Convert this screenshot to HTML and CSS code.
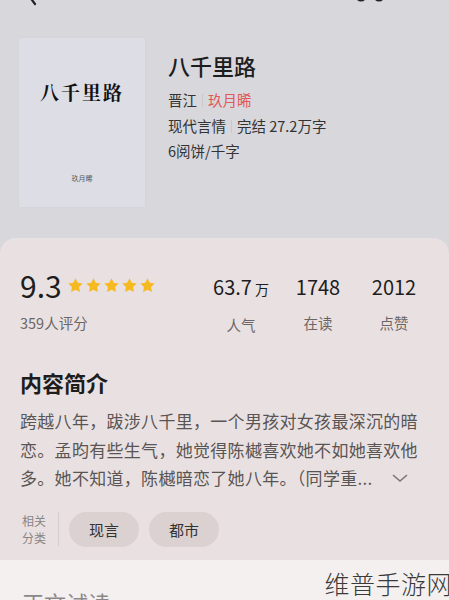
FILE: index.html
```html
<!DOCTYPE html>
<html lang="zh-CN">
  <head>
    <meta charset="UTF-8" />
    <meta name="viewport" content="width=device-width, initial-scale=1.0" />
    <title>八千里路</title>
    <link rel="stylesheet" href="styles.css">
  </head>
  <body>
    <div class="page">
      <div class="topbar">
        <svg class="back-icon" width="12" height="20" viewBox="0 0 12 20">
          <path d="M9 2 L3 10 L9 18" fill="none" stroke="#222" stroke-width="2.2" stroke-linecap="round" />
        </svg>
        <svg class="more-icon" width="34" height="20" viewBox="0 0 34 20">
          <circle cx="8" cy="10" r="4.5" fill="none" stroke="#222" stroke-width="2.2" />
          <circle cx="26" cy="10" r="4.5" fill="none" stroke="#222" stroke-width="2.2" />
        </svg>
      </div>

      <div class="book">
        <div class="cover">
          <div class="cover-title">八千里路</div>
          <div class="cover-author">玖月晞</div>
        </div>
        <div class="info">
          <h1 class="title">八千里路</h1>
          <div class="meta">晋江<span class="sep"></span><span class="author">玖月晞</span></div>
          <div class="meta">现代言情<span class="sep"></span>完结 27.2万字</div>
          <div class="meta">6阅饼/千字</div>
        </div>
      </div>

      <div class="card">
        <div class="stats-row">
          <div class="rating">
            <div class="score">9.3
              <span class="stars">
                <svg viewBox="0 0 20 20"><path d="M10 1.5l2.6 5.4 5.8.8-4.2 4.1 1 5.8L10 14.9l-5.2 2.7 1-5.8L1.6 7.7l5.8-.8z" /></svg>
                <svg viewBox="0 0 20 20"><path d="M10 1.5l2.6 5.4 5.8.8-4.2 4.1 1 5.8L10 14.9l-5.2 2.7 1-5.8L1.6 7.7l5.8-.8z" /></svg>
                <svg viewBox="0 0 20 20"><path d="M10 1.5l2.6 5.4 5.8.8-4.2 4.1 1 5.8L10 14.9l-5.2 2.7 1-5.8L1.6 7.7l5.8-.8z" /></svg>
                <svg viewBox="0 0 20 20"><path d="M10 1.5l2.6 5.4 5.8.8-4.2 4.1 1 5.8L10 14.9l-5.2 2.7 1-5.8L1.6 7.7l5.8-.8z" /></svg>
                <svg viewBox="0 0 20 20"><path d="M10 1.5l2.6 5.4 5.8.8-4.2 4.1 1 5.8L10 14.9l-5.2 2.7 1-5.8L1.6 7.7l5.8-.8z" /></svg>
              </span>
            </div>
            <div class="label">359人评分</div>
          </div>
          <div class="stats">
            <div class="stat">
              <div class="num">63.7<small>万</small></div>
              <div class="label">人气</div>
            </div>
            <div class="stat">
              <div class="num">1748</div>
              <div class="label">在读</div>
            </div>
            <div class="stat">
              <div class="num">2012</div>
              <div class="label">点赞</div>
            </div>
          </div>
        </div>

        <h2 class="section-title">内容简介</h2>
        <p class="summary">跨越八年，跋涉八千里，一个男孩对女孩最深沉的暗恋。孟昀有些生气，她觉得陈樾喜欢她不如她喜欢他多。她不知道，陈樾暗恋了她八年。（同学重...<svg class="chevron" width="18" height="12" viewBox="0 0 18 12"><path d="M2 3 L9 9 L16 3" fill="none" stroke="#777" stroke-width="1.6" /></svg></p>

        <div class="tags">
          <div class="tags-label">相关<br />分类</div>
          <span class="tag">现言</span>
          <span class="tag">都市</span>
        </div>
      </div>

      <div class="reading">
        <div class="reading-title">正文试读</div>
      </div>

      <div class="watermark">维普手游网</div>
    </div>
  </body>
</html>
```

FILE: styles.css
```css
body {
  margin: 0;
  padding: 0;
  background-color: #d8d7dc;
  font-family: "Noto Sans CJK SC", "Noto Sans", sans-serif;
  color: #222;
}

.page {
  position: relative;
  width: 449px;
  height: 600px;
  overflow: hidden;
}

/* Top bar, mostly scrolled away */
.topbar {
  height: 6px;
  display: flex;
  justify-content: space-between;
  align-items: flex-end;
  padding: 0 62px 0 26px;
  overflow: hidden;
}

.topbar svg {
  display: block;
  flex-shrink: 0;
}

/* Book header */
.book {
  display: flex;
  gap: 23px;
  padding: 32px 0 0 19px;
}

.cover {
  width: 126px;
  height: 169px;
  background-color: #dddee5;
  box-shadow: 0 0 3px rgba(0, 0, 0, 0.04);
  display: flex;
  flex-direction: column;
  align-items: center;
}

.cover-title {
  margin-top: 40px;
  font-family: "Noto Serif CJK SC", "Noto Sans CJK SC", serif;
  font-weight: bold;
  font-size: 19px;
  letter-spacing: 2px;
  color: #111;
}

.cover-author {
  margin-top: 68px;
  font-size: 7px;
  color: #555;
}

.info {
  padding-top: 12px;
}

.title {
  margin: 0;
  font-size: 22px;
  font-weight: 500;
  line-height: 30px;
  color: #1d1d1d;
}

.meta {
  font-size: 14.5px;
  line-height: 25.5px;
  color: #333;
}

.info .meta:first-of-type {
  margin-top: 7px;
}

.sep {
  display: inline-block;
  width: 1px;
  height: 13px;
  margin: 0 5px;
  vertical-align: -1px;
  background-color: #c9c9cc;
}

.author {
  color: #e0585a;
}

/* Detail card */
.card {
  margin-top: 31px;
  padding: 29px 17px 0 20px;
  background-color: #e9e1e1;
  border-radius: 16px 16px 0 0;
  height: 322px;
  box-sizing: border-box;
}

.stats-row {
  display: flex;
  justify-content: space-between;
}

.score {
  display: flex;
  align-items: center;
  font-size: 30px;
  line-height: 36px;
  color: #1d1d1d;
}

.stars {
  display: flex;
  gap: 1px;
  margin-left: 5px;
}

.stars svg {
  width: 17px;
  height: 17px;
  fill: #f5b922;
}

.label {
  margin-top: 10px;
  font-size: 14.5px;
  line-height: 20px;
  color: #6b6666;
}

.stats {
  display: grid;
  grid-template-columns: 78px 76px 76px;
}

.stat {
  text-align: center;
}

.num {
  font-size: 20px;
  line-height: 40px;
  color: #1d1d1d;
}

.stat .label {
  margin-top: 6px;
}

.num small {
  font-size: 14px;
  margin-left: 3px;
}

.section-title {
  margin: 33px 0 0 0;
  font-size: 22px;
  font-weight: bold;
  line-height: 28px;
  color: #1d1d1d;
}

.summary {
  margin: 11px 0 0 0;
  font-size: 17px;
  line-height: 28.5px;
  letter-spacing: 0.3px;
  color: #5a5555;
}

.chevron {
  margin-left: 18px;
  vertical-align: 1px;
}

.tags {
  display: flex;
  align-items: center;
  margin-top: 19px;
}

.tags-label {
  font-size: 12px;
  line-height: 17px;
  color: #8a8585;
  padding: 0 12px 0 2px;
  border-right: 1px solid #d6cdcd;
  margin-right: 10px;
}

.tag {
  width: 70px;
  height: 35px;
  line-height: 35px;
  text-align: center;
  margin-right: 10px;
  border-radius: 18px;
  background-color: #dbd1d1;
  font-size: 15px;
  color: #333;
}

/* Trial reading section */
.reading {
  height: 40px;
  background-color: #f4f0f0;
  padding: 27px 0 0 22px;
  box-sizing: border-box;
}

.reading-title {
  font-size: 22px;
  line-height: 30px;
  color: #8c8888;
}

/* Site watermark over the page */
.watermark {
  position: absolute;
  right: -3px;
  top: 565px;
  font-size: 25px;
  font-weight: 300;
  letter-spacing: 0.5px;
  color: #3a3a3a;
}
```
